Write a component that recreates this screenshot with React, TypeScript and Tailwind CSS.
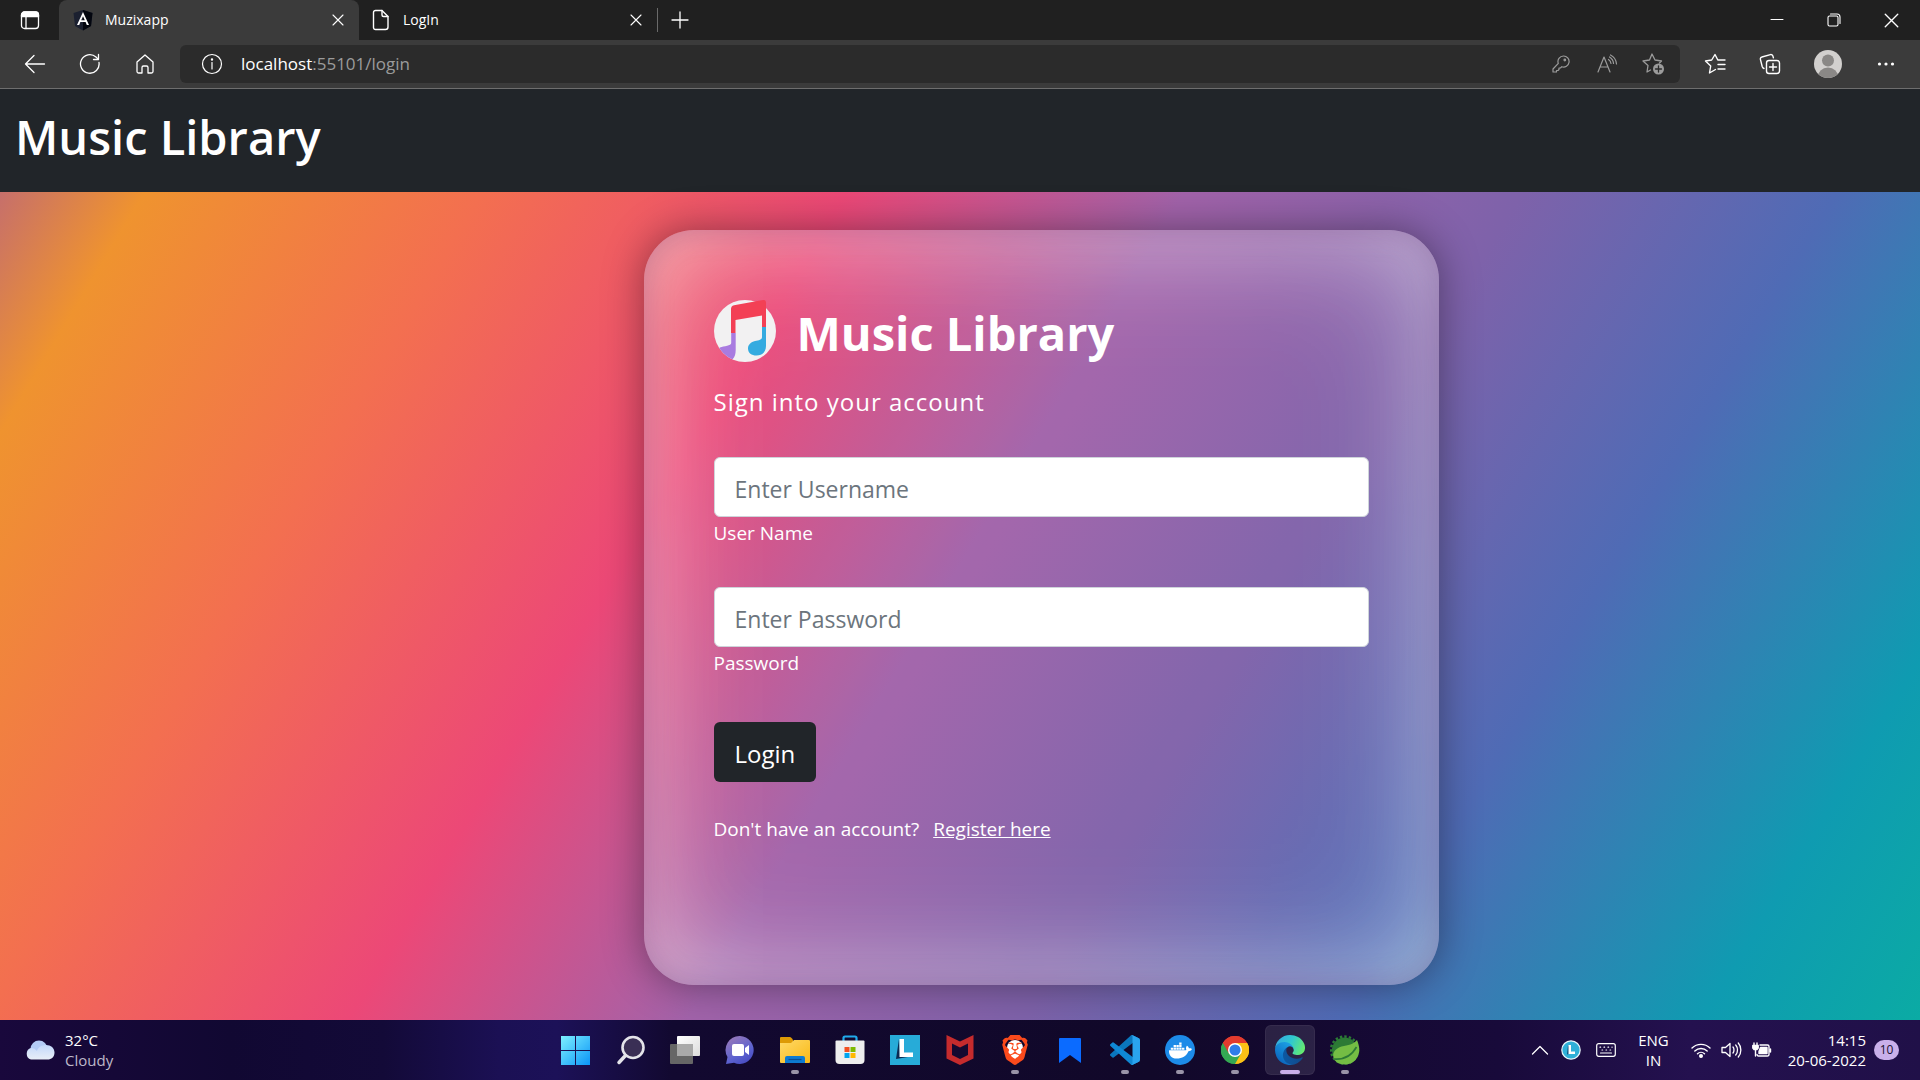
import type { ReactNode } from "react";
import { FaDocker } from "react-icons/fa";
import { SiBrave } from "react-icons/si";

const stroke = {
  fill: "none",
  stroke: "currentColor",
  strokeLinecap: "round" as const,
  strokeLinejoin: "round" as const,
};

/* ---------- Browser chrome icons ---------- */

const TabActionsIcon = () => (
  <svg width="20" height="20" viewBox="0 0 20 20" {...stroke} strokeWidth="1.3">
    <rect x="1.5" y="2" width="17" height="16.5" rx="3" />
    <path d="M1.5 6.500V5a3 3 0 0 1 3-3h11a3 3 0 0 1 3 3v1.500Z" fill="currentColor" />
    <path d="M6 7v11.500" />
  </svg>
);

const AngularIcon = () => (
  <svg width="20" height="22" viewBox="0 0 20 22">
    <path d="M10 1 19.500 4 18 17l-8 4.500L2 17 .5 4Z" fill="#1b2030" />
    <path d="M10 1 19.500 4 18 17l-8 4.500Z" fill="#03060f" />
    <path d="M10 3 4 16h2.200l1.200-3h5.200l1.200 3H16Zm0 4.200 1.800 4.100H8.200Z" fill="#fff" />
  </svg>
);

const PageIcon = () => (
  <svg width="18" height="22" viewBox="0 0 18 22" {...stroke} strokeWidth="1.400">
    <path d="M3.500 1.500H10l6 6V18a2.500 2.500 0 0 1-2.500 2.500h-10A2 2 0 0 1 1.500 18.500v-15a2 2 0 0 1 2-2Z" />
    <path d="M10 1.500V6a1.500 1.500 0 0 0 1.500 1.500H16" />
  </svg>
);

const CrossIcon = ({ size }: { size: number }) => (
  <svg width={size} height={size} viewBox="0 0 12 12" {...stroke} strokeWidth="1.100">
    <path d="m1 1 10 10M11 1 1 11" />
  </svg>
);

const PlusIcon = () => (
  <svg width="18" height="18" viewBox="0 0 18 18" {...stroke} strokeWidth="1.300">
    <path d="M9 1v16M1 9h16" />
  </svg>
);

const MinimizeIcon = () => (
  <svg width="14" height="14" viewBox="0 0 14 14" {...stroke} strokeWidth="1">
    <path d="M1 6.500h12" />
  </svg>
);

const RestoreIcon = () => (
  <svg width="14" height="14" viewBox="0 0 14 14" {...stroke} strokeWidth="1.100">
    <rect x="1" y="3" width="10" height="10" rx="1.500" />
    <path d="M3.500 1H10a3 3 0 0 1 3 3v6.500" />
  </svg>
);

const BackIcon = () => (
  <svg width="22" height="20" viewBox="0 0 22 20" {...stroke} strokeWidth="1.300">
    <path d="M10 1.500 1.500 10l8.500 8.500M1.500 10h19" />
  </svg>
);

const RefreshIcon = () => (
  <svg width="22" height="22" viewBox="0 0 22 22" {...stroke} strokeWidth="1.300">
    <path d="M20 9.500A9.300 9.300 0 1 1 17 4l2 2" />
    <path d="M19.500 1.500v5h-5" />
  </svg>
);

const HomeIcon = () => (
  <svg width="20" height="22" viewBox="0 0 20 22" {...stroke} strokeWidth="1.300">
    <path d="M10 2 2 9v9.500A1.500 1.500 0 0 0 3.500 20H7v-5.500A1.500 1.500 0 0 1 8.500 13h3a1.500 1.500 0 0 1 1.500 1.500V20h3.500a1.500 1.500 0 0 0 1.500-1.500V9Z" />
  </svg>
);

const InfoIcon = () => (
  <svg width="22" height="22" viewBox="0 0 22 22" {...stroke} strokeWidth="1.200">
    <circle cx="11" cy="11" r="9.500" />
    <path d="M11 9.500V16" />
    <circle cx="11" cy="6.500" r=".6" fill="currentColor" />
  </svg>
);

const KeyIcon = () => (
  <svg width="18" height="18" viewBox="0 0 18 18" {...stroke} strokeWidth="1.200">
    <path d="M11.500 1a5.500 5.500 0 1 1-1.700 10.700L8.500 13H7v1.500L6 15.500H4.500V17H1v-3l5.300-5.600A5.500 5.500 0 0 1 11.500 1Z" />
    <circle cx="12.800" cy="5" r=".8" fill="currentColor" />
  </svg>
);

const ReadAloudIcon = () => (
  <svg width="22" height="20" viewBox="0 0 22 20" {...stroke} strokeWidth="1.200">
    <path d="M2 18 8 3l6 15M4.200 13h7.600" />
    <path d="M12.500 5.500c1.400 1 2.300 2.200 2.500 4M13.500 3c2.400 1.500 3.900 3.500 4 6.500M14.500 1c3.500 1.700 5.600 4.500 6 9" />
  </svg>
);

const StarAddIcon = () => (
  <svg width="24" height="24" viewBox="0 0 24 24" {...stroke} strokeWidth="1.300">
    <path d="M9.500 18 6 20l1-6.500L2 9l6.500-1L11 2l3 6 6.500 1-2 2" />
    <circle cx="17.500" cy="17" r="5.500" fill="currentColor" stroke="none" />
    <path d="M17.500 14v6M14.500 17h6" stroke="#2b2b2b" />
  </svg>
);

const FavoritesIcon = () => (
  <svg width="22" height="22" viewBox="0 0 22 22" {...stroke} strokeWidth="1.400">
    <path d="M11.500 16.500 5.500 20l1.200-7L1.500 8l6.200-1L11 1.500 13.800 7H21M14 11.500h7M14 16h7" />
  </svg>
);

const CollectionsIcon = () => (
  <svg width="22" height="22" viewBox="0 0 22 22" {...stroke} strokeWidth="1.400">
    <rect x="7.500" y="7.500" width="13" height="13" rx="2.500" />
    <path d="M14 10.500v7M10.500 14h7M5 15.500C4 15 3.500 14.500 3.200 13.500L1.400 6.400A2 2 0 0 1 2.900 4l8.500-2.400a2 2 0 0 1 2.500 1.500l.5 1.700" />
  </svg>
);

const AvatarIcon = () => (
  <svg width="28" height="28" viewBox="0 0 28 28">
    <clipPath id="avatar-clip">
      <circle cx="14" cy="14" r="14" />
    </clipPath>
    <g clipPath="url(#avatar-clip)">
      <rect width="28" height="28" fill="#d2d0ce" />
      <circle cx="14" cy="10.500" r="6" fill="#8a8886" />
      <circle cx="14" cy="28" r="10.500" fill="#8a8886" />
    </g>
  </svg>
);

const DotsIcon = () => (
  <svg width="18" height="6" viewBox="0 0 18 6" fill="currentColor">
    <circle cx="2.500" cy="3" r="1.600" />
    <circle cx="9" cy="3" r="1.600" />
    <circle cx="15.500" cy="3" r="1.600" />
  </svg>
);

/* ---------- Login card logo ---------- */

const MusicLogo = () => (
  <svg width="62" height="62" viewBox="0 0 62 62" className="shrink-0">
    <defs>
      <clipPath id="music-clip">
        <path d="M0 31a31 31 0 0 0 62 0A31 31 0 0 0 52 8V0H17v3A31 31 0 0 0 0 31Z" />
      </clipPath>
    </defs>
    <circle cx="31" cy="31" r="31" fill="#f2f1f2" />
    <g clipPath="url(#music-clip)">
      <path d="M17 33V9q0-3 3-3.800L49 0q3-.4 3 2.600V27h-4V15.500L21.500 20v13Z" fill="#f34055" />
      <path d="M17.200 33h4.500v17c0 8-3.700 12-11.700 12S-1 51 6 47.500c4-1.500 11.200-1.500 11.200-4.500Z" fill="#a97be0" />
      <path d="M48 27h4v19c0 6-4 9.500-9.500 9.500-5 0-8.500-2.500-8.500-7 0-4 3-6.500 7-7.500 4-.8 7-1 7-4Z" fill="#34abe0" />
    </g>
  </svg>
);

/* ---------- Taskbar icons ---------- */

const CloudIcon = () => (
  <svg width="30" height="20" viewBox="0 0 30 20">
    <defs>
      <linearGradient id="cloud" x1="0" y1="0" x2="0" y2="1">
        <stop offset="0" stopColor="#c3d8fb" />
        <stop offset="1" stopColor="#e8eef8" />
      </linearGradient>
    </defs>
    <circle cx="14" cy="9" r="8.500" fill="#b4ccf6" />
    <path d="M6 19.500A6 6 0 0 1 6 8c3 0 4 1 6 3 1-4 5-6 9-6 5 0 8.500 3 8.500 7.500s-3 7-7 7Z" fill="url(#cloud)" />
  </svg>
);

const WindowsIcon = () => (
  <svg width="30" height="30" viewBox="0 0 30 30">
    <defs>
      <linearGradient id="win" x1="0" y1="0" x2="1" y2="1">
        <stop offset="0" stopColor="#7df0ff" />
        <stop offset="1" stopColor="#0b95f7" />
      </linearGradient>
    </defs>
    <path d="M1 1h14v14H1ZM16 1h14v14H16ZM1 16h14v14H1ZM16 16h14v14H16Z" fill="url(#win)" />
  </svg>
);

const SearchIcon = () => (
  <svg width="30" height="30" viewBox="0 0 30 30" fill="none" stroke="#e4e4ea" strokeLinecap="round">
    <circle cx="18" cy="12.500" r="10.500" strokeWidth="2.600" fill="#3a2f55" />
    <path d="m10.500 20.500-6.500 7" strokeWidth="3.500" />
  </svg>
);

const TaskViewIcon = () => (
  <svg width="30" height="30" viewBox="0 0 30 30">
    <defs>
      <linearGradient id="tvf" x1="0" y1="0" x2="1" y2="1">
        <stop offset="0" stopColor="#fff" />
        <stop offset="1" stopColor="#dcdcdc" />
      </linearGradient>
    </defs>
    <rect x="7" y="1" width="23" height="20" rx="1" fill="url(#tvf)" />
    <rect y="9" width="23" height="20" rx="1" fill="#666" />
    <path d="M7 9h16v12H7Z" fill="#a9a9a9" />
  </svg>
);

const ChatIcon = () => (
  <svg width="30" height="30" viewBox="0 0 30 30">
    <defs>
      <linearGradient id="chat" x1="0" y1="0" x2=".6" y2="1">
        <stop offset="0" stopColor="#a17bb5" />
        <stop offset=".7" stopColor="#5d63d0" />
        <stop offset="1" stopColor="#4a4fc4" />
      </linearGradient>
    </defs>
    <path d="M15 1a14 14 0 1 1-6 26.800L1 29l1.500-7A14 14 0 0 1 15 1Z" fill="url(#chat)" />
    <rect x="7" y="9" width="12" height="12" rx="2" fill="#fff" />
    <path d="m20 13 4-3v10l-4-3Z" fill="#fff" />
  </svg>
);

const FolderIcon = () => (
  <svg width="30" height="30" viewBox="0 0 30 30">
    <defs>
      <linearGradient id="folder" x1="0" y1="0" x2="1" y2="1">
        <stop offset="0" stopColor="#ffd968" />
        <stop offset="1" stopColor="#f9b916" />
      </linearGradient>
    </defs>
    <path d="M0 3q0-1 1-1h9q1 0 2 1.500L13 5v4H0Z" fill="#dd9a06" />
    <path d="M0 8h11l3-3h15q1 0 1 1v21q0 1-1 1H1q-1 0-1-1Z" fill="url(#folder)" />
    <path d="M5 28v-5q0-2 2-2h16q2 0 2 2v5Z" fill="#0d7bd1" />
    <path d="M8.500 24.500h13" stroke="#0a4f94" strokeWidth="1.200" />
  </svg>
);

const StoreIcon = () => (
  <svg width="30" height="30" viewBox="0 0 30 30">
    <path d="M8.500 7V3q0-1.500 1.500-1.500h10q1.500 0 1.500 1.500v4" fill="none" stroke="#20aaec" strokeWidth="2.200" />
    <path d="M.5 6.500q0-1 1-1h27q1 0 1 1V25a4 4 0 0 1-4 4h-21a4 4 0 0 1-4-4Z" fill="#eee" />
    <path d="M9.500 12h5v5h-5Z" fill="#f25022" />
    <path d="M15.500 12h5v5h-5Z" fill="#7fba00" />
    <path d="M9.500 18h5v5h-5Z" fill="#00a4ef" />
    <path d="M15.500 18h5v5h-5Z" fill="#ffb900" />
  </svg>
);

const LIcon = () => (
  <svg width="30" height="30" viewBox="0 0 30 30">
    <rect width="30" height="30" fill="#27abd8" />
    <path d="m9 4-3 20 12-2-8-3Z" fill="#0a2a52" />
    <path d="M9.500 4H14v13.500h9V22H9.500Z" fill="#fff" />
  </svg>
);

const McAfeeIcon = () => (
  <svg width="30" height="30" viewBox="0 0 30 30">
    <path d="M1.500 0 15 6.500 28.500 0v23.500L15 30 1.500 23.500Z" fill="#c52b2d" />
    <path d="m7 8.500 8 4 8-4V20l-8 4-8-4Z" fill="#150930" />
  </svg>
);

const BraveIcon = () => (
  <span className="grid size-[30px] place-items-center">
    <span className="col-start-1 row-start-1 h-5 w-4 rounded-full bg-white" />
    <SiBrave size={30} color="#fb4a1c" className="col-start-1 row-start-1" />
  </span>
);

const BookmarkIcon = () => (
  <svg width="30" height="30" viewBox="0 0 30 30">
    <path d="M4 4q0-1 1-1h20q1 0 1 1v24l-11-8-11 8Z" fill="#0b6bff" />
  </svg>
);

const VsCodeIcon = () => (
  <svg width="30" height="30" viewBox="0 0 100 100">
    <path d="M96 11 75.500 1a6 6 0 0 0-7 1.200L1.500 63.500a4 4 0 0 0 0 6l5.500 5a4 4 0 0 0 5.200.2L93 13.500a4.200 4.200 0 0 1 6.700 3.200v-.2A6 6 0 0 0 96 11Z" fill="#0a76bd" />
    <path d="M96 89 75.500 99a6 6 0 0 1-7-1.200L1.500 36.500a4 4 0 0 1 0-6l5.500-5a4 4 0 0 1 5.200-.2L93 86.500a4.200 4.200 0 0 0 6.700-3.200v.2A6 6 0 0 1 96 89Z" fill="#0f88d4" />
    <path d="M75.800 99a6.200 6.200 0 0 1-7.100-1.200c2.300 2.300 6.300.7 6.300-2.600V4.800c0-3.300-4-4.900-6.300-2.600A6.200 6.200 0 0 1 75.800 1l20.600 10A6.200 6.200 0 0 1 100 16.500v67a6.200 6.200 0 0 1-3.600 5.600Z" fill="#2aa4ee" />
  </svg>
);

const DockerIcon = () => (
  <span className="grid size-[30px] place-items-center rounded-full bg-[#1d8be8]">
    <FaDocker size={23} color="#fff" />
  </span>
);

const ChromeIcon = () => (
  <svg width="28" height="28" viewBox="0 0 48 48">
    <path d="M24 24 3.200 12A24 24 0 0 1 44.800 12Z" fill="#ea4335" />
    <path d="M24 24 44.800 12A24 24 0 0 1 24 48Z" fill="#fbc116" />
    <path d="M24 24v24A24 24 0 0 1 3.200 12Z" fill="#34a853" />
    <path d="M24 12h20.800A24 24 0 0 1 24 48l10.400-18Z" fill="#fbc116" />
    <path d="M13.600 30 3.200 12A24 24 0 0 0 24 48l10.400-18Z" fill="#34a853" />
    <path d="M3.200 12A24 24 0 0 1 44.800 12H24L13.600 30Z" fill="#e33b2e" />
    <circle cx="24" cy="24" r="12" fill="#fff" />
    <circle cx="24" cy="24" r="9.500" fill="#2f7de9" />
  </svg>
);

const EdgeIcon = () => (
  <svg width="30" height="30" viewBox="0 0 256 256">
    <defs>
      <linearGradient id="edge-a" x1="0" y1="0" x2="1" y2="0">
        <stop offset="0" stopColor="#0c59a4" />
        <stop offset="1" stopColor="#114a8b" />
      </linearGradient>
      <linearGradient id="edge-b" x1=".8" y1=".2" x2=".3" y2="1">
        <stop offset="0" stopColor="#1b9de2" />
        <stop offset=".5" stopColor="#1280d0" />
        <stop offset="1" stopColor="#0b60b8" />
      </linearGradient>
      <linearGradient id="edge-c" x1="0" y1=".3" x2="1" y2=".6">
        <stop offset="0" stopColor="#35a9e0" />
        <stop offset=".5" stopColor="#30c8cf" />
        <stop offset="1" stopColor="#66eb6e" />
      </linearGradient>
    </defs>
    <path fill="url(#edge-a)" d="M231 190.500c-3.400 1.800-6.900 3.400-10.500 4.700a101.500 101.500 0 0 1-35.900 6.400c-47.300 0-88.500-32.500-88.500-74.300a31.500 31.500 0 0 1 16.400-27.300c-42.800 1.800-53.800 46.400-53.800 72.500 0 74 68.100 81.400 82.800 81.400 7.900 0 19.800-2.300 27-4.600l1.300-.4a128.300 128.300 0 0 0 66.600-52.800 4 4 0 0 0-5.400-5.600z" />
    <path fill="url(#edge-b)" d="M105.700 241.400a79.200 79.200 0 0 1-22.700-21.300 80.700 80.700 0 0 1 29.500-120c3.200-1.500 8.500-4.100 15.600-4a32.400 32.400 0 0 1 25.700 13 31.900 31.900 0 0 1 6.300 18.700c0-.2 24.500-79.600-80-79.600-43.900 0-80 41.600-80 78.200a130.200 130.200 0 0 0 12.100 56 128 128 0 0 0 156.400 67 75.500 75.500 0 0 1-62.800-8z" />
    <path fill="url(#edge-c)" d="M152.300 148.900c-.9 1-3.400 2.500-3.400 5.600 0 2.600 1.700 5.200 4.800 7.300 14.400 10.100 41.700 8.700 41.800 8.700a59.600 59.600 0 0 0 30.300-8.300 61.400 61.400 0 0 0 30.400-53.100c.3-22.400-8-37.300-11.300-43.900C223.700 23.400 177.700 0 128 0A128 128 0 0 0 0 126.200c.5-36.500 36.800-66 80-66 3.500 0 23.500.3 42 10.100a72.600 72.600 0 0 1 30.900 29.300c6.100 10.600 7.200 24.100 7.200 29.500s-2.700 13.300-7.800 19.900z" />
  </svg>
);

const SpringIcon = () => (
  <svg width="30" height="30" viewBox="0 0 30 30">
    <circle cx="14.500" cy="15" r="12.500" fill="#2c7a35" />
    <circle cx="14.500" cy="15" r="13.500" fill="none" stroke="#2c7a35" strokeWidth="2.500" strokeDasharray="2.400 2.100" />
    <path d="M27 5c3 7 3.500 14-1.500 20C20 31 9 31 4.500 25c-3-5-1-11 7-13.500 7-1.500 11.500-2 15.500-6.500Z" fill="#74bd44" />
    <path d="M3.500 24C14 25 22 20 26.500 12" fill="none" stroke="#2c7a35" strokeWidth="1.600" />
  </svg>
);

const ChevronUpIcon = () => (
  <svg width="18" height="10" viewBox="0 0 18 10" {...stroke} strokeWidth="1.300">
    <path d="m1.500 9 7.500-7.500L16.500 9" />
  </svg>
);

const LBadgeIcon = () => (
  <svg width="20" height="20" viewBox="0 0 20 20">
    <circle cx="10" cy="10" r="9.200" fill="#2fb0d8" stroke="#e8f4fa" strokeWidth="1.200" />
    <path d="m7 5-1 9.500 5-1.500Z" fill="#0d4a78" />
    <path d="M7.500 5H10v6.500h4V14H7.500Z" fill="#fff" />
  </svg>
);

const KeyboardIcon = () => (
  <svg width="20" height="14" viewBox="0 0 20 14" {...stroke} strokeWidth="1.200">
    <rect x=".7" y=".7" width="18.600" height="12.600" rx="2" />
    <path d="M4.500 10h11M4 4.200h.6M8 4.200h.6M12 4.200h.6M16 4.200h.1M6 7h.6M10 7h.6M14 7h.6" />
  </svg>
);

const WifiIcon = () => (
  <svg width="20" height="16" viewBox="0 0 20 16" {...stroke} strokeWidth="1.400">
    <path d="M1 6a13 13 0 0 1 18 0M3.800 9a9 9 0 0 1 12.400 0M6.500 11.800a5 5 0 0 1 7 0" />
    <circle cx="10" cy="14" r="1.300" fill="currentColor" />
  </svg>
);

const SpeakerIcon = () => (
  <svg width="21" height="18" viewBox="0 0 21 18" {...stroke} strokeWidth="1.300">
    <path d="M1 6.500h3.500L9 2.500v13l-4.500-4H1ZM12 6c1.300 1.500 1.300 4.500 0 6M14.700 4c2.400 2.700 2.400 7.300 0 10M17.300 2c3.400 3.800 3.400 10.200 0 14" />
  </svg>
);

const BatteryIcon = () => (
  <svg width="20" height="16" viewBox="0 0 20 16" {...stroke} strokeWidth="1.400">
    <path d="M8 3h7.500A1.500 1.500 0 0 1 17 4.500v8a1.500 1.500 0 0 1-1.500 1.500h-9A1.500 1.500 0 0 1 5 12.500M18.500 7v3" />
    <path d="M8.500 5.500H15v6H7v-2Z" fill="currentColor" />
    <path d="M2 1v2M5 1v2M.8 3.500h5.400V6L5 7.500H2L.8 6ZM3.500 8v6" fill="currentColor" />
  </svg>
);

/* ---------- Building blocks ---------- */

type IconButtonProps = { label: string; className: string; children: ReactNode };

const IconButton = ({ label, className, children }: IconButtonProps) => (
  <button type="button" aria-label={label} className={`flex shrink-0 items-center justify-center ${className}`}>
    {children}
  </button>
);

type TaskApp = { name: string; icon: ReactNode; state?: "running" | "active" };

const apps: TaskApp[] = [
  { name: "Start", icon: <WindowsIcon /> },
  { name: "Search", icon: <SearchIcon /> },
  { name: "Task view", icon: <TaskViewIcon /> },
  { name: "Chat", icon: <ChatIcon /> },
  { name: "File Explorer", icon: <FolderIcon />, state: "running" },
  { name: "Microsoft Store", icon: <StoreIcon /> },
  { name: "L", icon: <LIcon /> },
  { name: "McAfee", icon: <McAfeeIcon /> },
  { name: "Brave", icon: <BraveIcon />, state: "running" },
  { name: "Bookmark", icon: <BookmarkIcon /> },
  { name: "Visual Studio Code", icon: <VsCodeIcon />, state: "running" },
  { name: "Docker", icon: <DockerIcon />, state: "running" },
  { name: "Chrome", icon: <ChromeIcon />, state: "running" },
  { name: "Edge", icon: <EdgeIcon />, state: "active" },
  { name: "Spring Tools", icon: <SpringIcon />, state: "running" },
];

const TaskButton = ({ app }: { app: TaskApp }) => (
  <button
    type="button"
    aria-label={app.name}
    className={`relative flex h-[50px] w-[50px] items-center justify-center rounded-md border ${
      app.state === "active" ? "border-white/5 bg-white/10" : "border-transparent"
    }`}
  >
    {app.icon}
    {app.state === "running" && <span className="absolute bottom-0 h-1 w-2 rounded-full bg-[#9a94a8]" />}
    {app.state === "active" && <span className="absolute bottom-0 h-1 w-5 rounded-full bg-[#c9aeea]" />}
  </button>
);

const TitleBar = () => (
  <div className="flex h-10 items-center bg-[#202020]">
    <IconButton label="Tab actions menu" className="h-10 w-[59px]">
      <TabActionsIcon />
    </IconButton>
    <div className="flex h-10 w-[300px] items-center rounded-t-lg bg-[#3b3b3b] pr-[11px] pl-3.5">
      <AngularIcon />
      <span className="ml-3 flex-1 text-sm">Muzixapp</span>
      <IconButton label="Close tab" className="size-5">
        <CrossIcon size={12} />
      </IconButton>
    </div>
    <div className="flex h-10 w-[298px] items-center pr-[11px] pl-[13px]">
      <PageIcon />
      <span className="ml-[13px] flex-1 text-sm">LogIn</span>
      <IconButton label="Close tab" className="size-5">
        <CrossIcon size={12} />
      </IconButton>
    </div>
    <div className="h-6 w-px bg-[#6a6a6a]" />
    <IconButton label="New tab" className="h-10 w-11">
      <PlusIcon />
    </IconButton>
    <div className="flex-1" />
    <IconButton label="Minimize" className="h-10 w-[57px]">
      <MinimizeIcon />
    </IconButton>
    <IconButton label="Restore" className="h-10 w-[57px]">
      <RestoreIcon />
    </IconButton>
    <IconButton label="Close" className="h-10 w-[58px]">
      <CrossIcon size={15} />
    </IconButton>
  </div>
);

const ToolBar = () => (
  <div className="flex h-[49px] items-center border-b border-[#6e6e6e] bg-[#3b3b3b] px-[7px]">
    <IconButton label="Back" className="h-10 w-[55px]">
      <BackIcon />
    </IconButton>
    <IconButton label="Refresh" className="h-10 w-[55px]">
      <RefreshIcon />
    </IconButton>
    <IconButton label="Home" className="h-10 w-[55px]">
      <HomeIcon />
    </IconButton>
    <div className="ml-2 flex h-[38px] flex-1 items-center rounded-md bg-[#2b2b2b] pl-[21px]">
      <InfoIcon />
      <p className="ml-[18px] flex-1 text-[17px] text-[#9b9b9b]">
        <span className="text-white">localhost</span>:55101/login
      </p>
      <div className="flex pr-1 text-[#9b9b9b]">
        <IconButton label="Passwords" className="h-9 w-[46px]">
          <KeyIcon />
        </IconButton>
        <IconButton label="Read aloud" className="h-9 w-[46px]">
          <ReadAloudIcon />
        </IconButton>
        <IconButton label="Add to favorites" className="h-9 w-[46px]">
          <StarAddIcon />
        </IconButton>
      </div>
    </div>
    <IconButton label="Favorites" className="ml-2 h-10 w-[54px]">
      <FavoritesIcon />
    </IconButton>
    <IconButton label="Collections" className="h-10 w-14">
      <CollectionsIcon />
    </IconButton>
    <IconButton label="Profile" className="h-10 w-[60px]">
      <AvatarIcon />
    </IconButton>
    <IconButton label="Settings and more" className="h-10 w-[55px]">
      <DotsIcon />
    </IconButton>
  </div>
);

type FieldProps = { id: string; type: string; placeholder: string; label: string };

const Field = ({ id, type, placeholder, label }: FieldProps) => (
  <div className="mb-10 flex flex-col">
    <input
      id={id}
      type={type}
      placeholder={placeholder}
      className="h-[60px] w-full rounded-md border border-[#ced4da] bg-white px-5 pt-1 text-[23px] text-[#212529] placeholder:text-[#6c757d]"
    />
    <label htmlFor={id} className="self-start pt-0.5 text-[19px] leading-7">
      {label}
    </label>
  </div>
);

const LoginCard = () => (
  <form
    className="w-[795px] max-w-full rounded-[50px] bg-white/3 px-[70px] pt-[70px] pb-[140px] shadow-[0_0_40px_rgba(0,0,0,0.4),inset_0_0_30px_rgba(70,10,90,0.26),inset_0_0_100px_rgba(255,255,255,0.3),inset_0_0_140px_rgba(255,255,255,0.38)]"
    onSubmit={(e) => e.preventDefault()}
  >
    <div className="flex items-center">
      <MusicLogo />
      <h2 className="ml-[21px] pt-1 text-[47px] leading-[58px] font-bold">Music Library</h2>
    </div>
    <p className="mt-6 mb-[39px] text-2xl leading-8 tracking-[1px]">Sign into your account</p>
    <Field id="username" type="text" placeholder="Enter Username" label="User Name" />
    <Field id="password" type="password" placeholder="Enter Password" label="Password" />
    <button type="submit" className="mt-[5px] h-[60px] rounded-md bg-[#212529] px-[21px] pt-1 text-2xl">
      Login
    </button>
    <p className="mt-[31px] text-[19px] leading-8">
      Don't have an account?
      <a href="#register" className="ml-3.5 underline">
        Register here
      </a>
    </p>
  </form>
);

const Taskbar = () => (
  <footer className="grid h-[60px] shrink-0 grid-cols-[1fr_auto_1fr] items-center bg-[linear-gradient(90deg,#19083c_0%,#110832_12%,#130a38_20%,#1b1054_26%,#1c1158_29%,#120930_35%,#110829_60%,#180a3a_78%,#24114f_88%,#201048_100%)]">
    <div className="flex items-center pl-[25px]">
      <CloudIcon />
      <div className="ml-2.5 text-[15px] leading-5">
        <p>32°C</p>
        <p className="text-[#bdb8c9]">Cloudy</p>
      </div>
    </div>
    <nav className="flex gap-[5px]">
      {apps.map((app) => (
        <TaskButton key={app.name} app={app} />
      ))}
    </nav>
    <div className="flex items-center justify-end pr-[21px] text-[15px] leading-5">
      <ChevronUpIcon />
      <span className="ml-3">
        <LBadgeIcon />
      </span>
      <span className="ml-[15px]">
        <KeyboardIcon />
      </span>
      <div className="ml-[22px] text-center">
        <p>ENG</p>
        <p>IN</p>
      </div>
      <div className="ml-[22px] flex items-center gap-2.5">
        <WifiIcon />
        <SpeakerIcon />
        <BatteryIcon />
      </div>
      <div className="ml-4 text-right">
        <p>14:15</p>
        <p>20-06-2022</p>
      </div>
      <span className="ml-2 flex h-5 w-[25px] items-center justify-center rounded-full bg-[#c9b0ea] text-xs text-[#1b1030]">
        10
      </span>
    </div>
  </footer>
);

export default function App() {
  return (
    <div className="flex min-h-screen flex-col font-['Open_Sans','Noto_Sans',sans-serif] text-white">
      <TitleBar />
      <ToolBar />
      <header className="h-[103px] bg-[#212529] px-[15px] pt-[18px]">
        <h1 className="text-[47px] leading-[60px] font-semibold">Music Library</h1>
      </header>
      <main className="flex flex-1 items-start justify-center bg-[linear-gradient(121deg,#c66f6b_0%,#ef932f_6%,#f36f50_20%,#ec4877_35%,#a263aa_49%,#7e62aa_63%,#4f6bb5_76%,#0f9bb1_91%,#0baba4_100%)] pt-[38px] pb-8 pl-[162px]">
        <LoginCard />
      </main>
      <Taskbar />
    </div>
  );
}
